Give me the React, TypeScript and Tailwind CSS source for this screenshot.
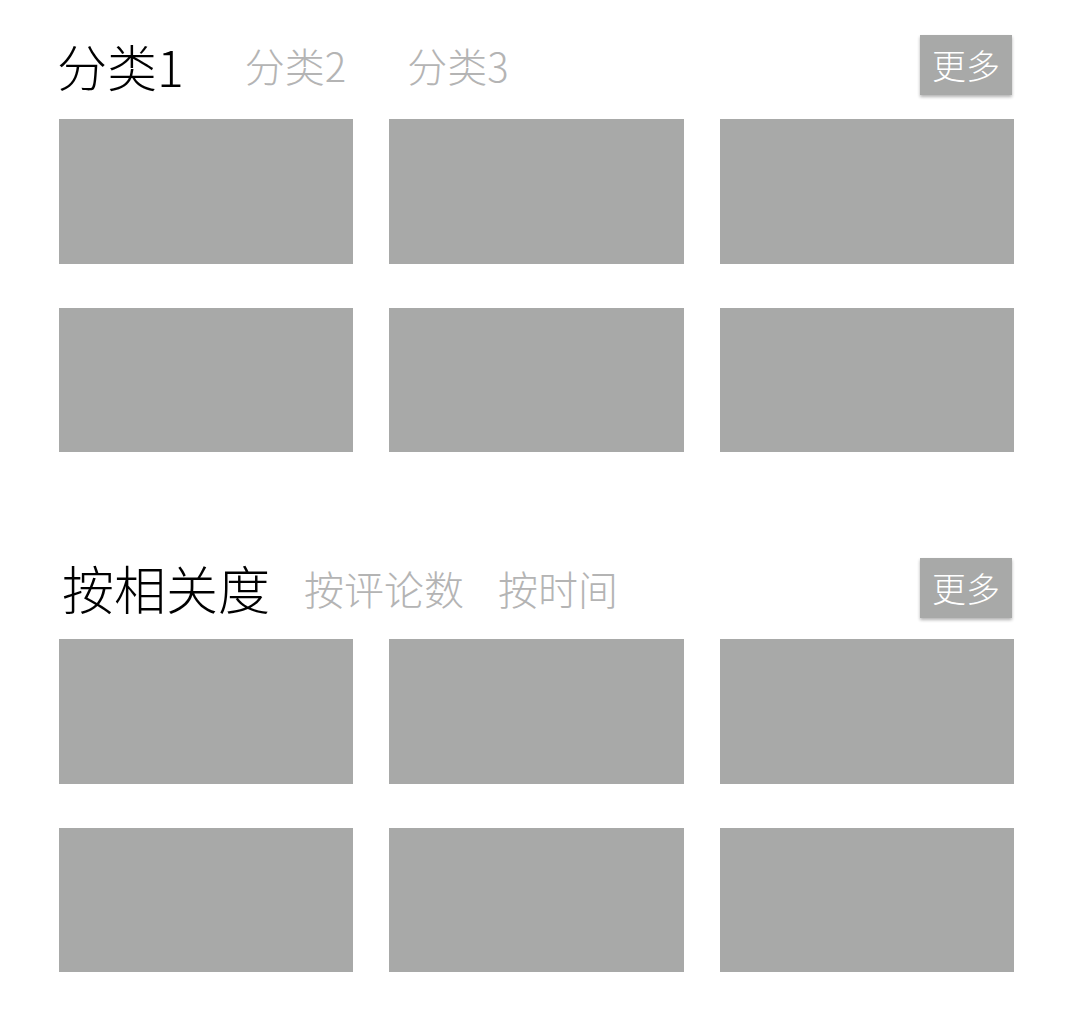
const sections = [
  { tabs: ["分类1", "分类2", "分类3"], gap: "gap-[61px]", main: "text-[50px]", pl: "pl-[57px]", mt: "mt-6" },
  { tabs: ["按相关度", "按评论数", "按时间"], gap: "gap-[34px]", main: "text-[52px]", pl: "pl-[62px]", mt: "mt-[21px]" },
];

function Section({ tabs, gap, main, pl, mt }: (typeof sections)[number]) {
  return (
    <section>
      <div className={`flex h-[60px] items-center justify-between pr-[64px] ${pl}`}>
        <div className={`flex items-center ${gap}`}>
          {tabs.map((t, i) => (
            <span
              key={t}
              className={
                i === 0
                  ? `${main} leading-none font-light text-black`
                  : "text-[40px] leading-none font-light text-[#b4b4b4]"
              }
            >
              {t}
            </span>
          ))}
        </div>
        <button className="flex h-[60px] w-[92px] items-center justify-center bg-[#a8a9a8] text-[34px] font-light leading-none text-white shadow-[0_2px_3px_rgba(0,0,0,0.3)]">
          更多
        </button>
      </div>
      <div className={`${mt} ml-[59px] grid w-[955px] grid-cols-3 gap-x-9 gap-y-11`}>
        {Array.from({ length: 6 }).map((_, i) => (
          <div key={i} className="h-[144.5px] bg-[#a8a9a8]" />
        ))}
      </div>
    </section>
  );
}

export default function App() {
  return (
    <div
      className="flex min-h-[1016px] w-[1076px] flex-col gap-[106px] bg-white pt-[35px]"
      style={{ fontFamily: '"Noto Sans CJK SC", "Noto Sans", sans-serif' }}
    >
      {sections.map((s) => (
        <Section key={s.tabs[0]} {...s} />
      ))}
    </div>
  );
}
